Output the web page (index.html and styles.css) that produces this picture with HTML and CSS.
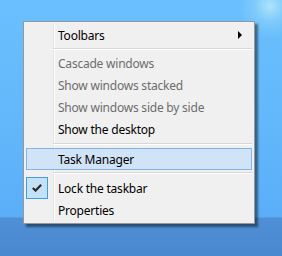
FILE: index.html
```html
<!DOCTYPE html>
<html>
<head>
<meta charset="utf-8">
<link rel="stylesheet" href="styles.css">
</head>
<body>
<div class="desktop">
  <div class="wall"></div>
  <div class="taskbar"></div>
  <div class="menu">
    <div class="list">
      <div class="item">Toolbars<span class="arrow"></span></div>
      <div class="sep"></div>
      <div class="item disabled">Cascade windows</div>
      <div class="item disabled">Show windows stacked</div>
      <div class="item disabled">Show windows side by side</div>
      <div class="item">Show the desktop</div>
      <div class="sep sep-wide"></div>
      <div class="item hot">Task Manager</div>
      <div class="sep sep-mid"></div>
      <div class="item"><span class="check"><svg width="10" height="8" viewBox="0 0 10 8"><path d="M0.8 4 L3.6 6.6 L9.2 0.8" fill="none" stroke="#2b2b2b" stroke-width="2.2"/></svg></span>Lock the taskbar</div>
      <div class="item">Properties</div>
    </div>
  </div>
</div>
</body>
</html>
```
FILE: styles.css
```css
html, body { margin: 0; padding: 0; }
body { width: 282px; height: 256px; overflow: hidden; font-family: "Noto Sans", "Open Sans", sans-serif; }
.desktop { position: relative; width: 282px; height: 256px; display: flex; flex-direction: column; }
.wall {
  flex: 1;
  background:
    radial-gradient(circle at 270px 6px, rgba(180,232,250,0.9) 0, rgba(150,215,250,0.45) 16px, rgba(120,200,255,0) 32px),
    linear-gradient(180deg, #6ac0fd 0%, #62b7fb 60%, #5aaef8 100%);
}
.taskbar {
  height: 39px;
  background: linear-gradient(180deg, #4f8fd6 0%, #4a88cf 100%);
  border-top: 1px solid #5b9be0;
  box-sizing: border-box;
}
.menu {
  position: absolute;
  left: 23px; top: 21px;
  width: 232px; height: 203px;
  box-sizing: border-box;
  border: 1px solid #979797;
  background: #f0f0f0;
  padding: 2px;
  box-shadow: 3px 3px 2px rgba(0,0,0,0.45);
}
.list {
  height: 100%;
  background: linear-gradient(90deg, transparent 27px, #e2e3e3 27px, #e2e3e3 28px, #ffffff 28px, #ffffff 29px, transparent 29px);
}
.item {
  position: relative;
  height: 22px;
  line-height: 22px;
  padding-left: 32px;
  padding-top: 1px;
  font-size: 12px;
  letter-spacing: -0.22px;
  color: #000;
  box-sizing: border-box;
  white-space: nowrap;
}
.disabled { color: #6d6d6d; }
.hot {
  background: #d1e3f6;
  border: 1px solid #84b3e6;
  line-height: 20px;
  padding-left: 31px;
}
.sep {
  height: 6px;
  margin-left: 27px;
  background: linear-gradient(180deg, transparent 2px, #d7d7d7 2px, #d7d7d7 3px, #ffffff 3px, #ffffff 4px, transparent 4px);
}
.sep-wide { height: 8px; background: linear-gradient(180deg, transparent 3px, #d7d7d7 3px, #d7d7d7 4px, #ffffff 4px, #ffffff 5px, transparent 5px); }
.sep-mid { height: 7px; }
.arrow {
  position: absolute;
  right: 10px; top: 7px;
  width: 0; height: 0;
  border-top: 4px solid transparent;
  border-bottom: 4px solid transparent;
  border-left: 4px solid #000;
}
.check {
  position: absolute;
  left: 0; top: 0;
  width: 22px; height: 22px;
  box-sizing: border-box;
  border: 1px solid #3b9fe0;
  background: #c5e1f5;
  display: flex; align-items: center; justify-content: center;
}
```
